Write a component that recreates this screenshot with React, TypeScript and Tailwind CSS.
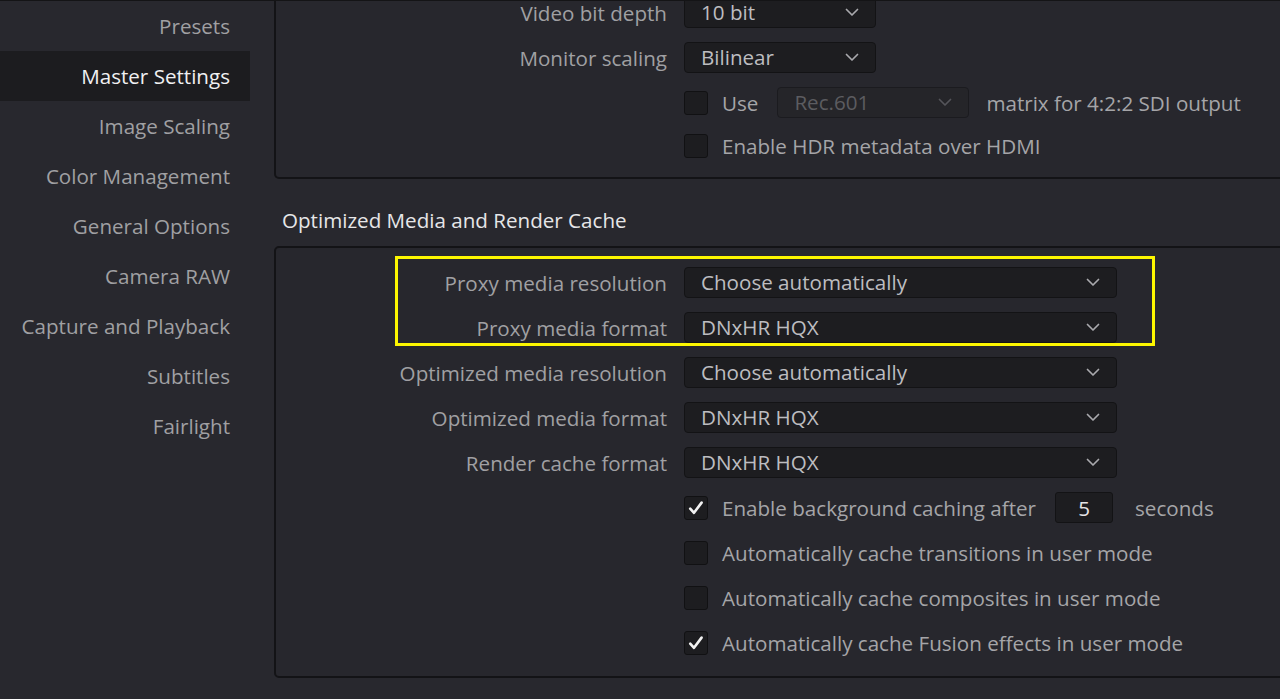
import React from "react";

const navItems = [
  "Presets",
  "Master Settings",
  "Image Scaling",
  "Color Management",
  "General Options",
  "Camera RAW",
  "Capture and Playback",
  "Subtitles",
  "Fairlight",
];

function Chevron({ muted = false }: { muted?: boolean }) {
  return (
    <svg width="14" height="9" viewBox="0 0 14 9" fill="none">
      <path
        d="M1.5 1.5 L7 7 L12.5 1.5"
        stroke={muted ? "#55555a" : "#a9a9ad"}
        strokeWidth="1.7"
        strokeLinecap="round"
        strokeLinejoin="round"
      />
    </svg>
  );
}

function Select({
  value,
  wide = false,
  disabled = false,
}: {
  value: string;
  wide?: boolean;
  disabled?: boolean;
}) {
  return (
    <div
      className={
        (wide ? "w-[433px] " : "w-[192px] ") +
        (disabled
          ? "bg-[#252529] border-[#1b1b1f] text-[#5c5c60] "
          : "bg-[#1d1d20] border-[#131315] text-[#bdbdc0] ") +
        "flex h-[31px] items-center justify-between rounded-[4px] border pl-[16px] pr-[16px]"
      }
    >
      <span className="leading-none">{value}</span>
      <Chevron muted={disabled} />
    </div>
  );
}

function Checkbox({ checked = false }: { checked?: boolean }) {
  return (
    <div className="flex h-[24px] w-[24px] shrink-0 items-center justify-center rounded-[3px] border border-[#111113] bg-[#1d1d20]">
      {checked && (
        <svg width="18" height="18" viewBox="0 0 18 18" fill="none">
          <path
            d="M3.2 9.6 L7 13.8 L14.6 3.6"
            stroke="#f2f2f2"
            strokeWidth="2.6"
            strokeLinecap="round"
            strokeLinejoin="round"
          />
        </svg>
      )}
    </div>
  );
}

function Row({
  label,
  h = "h-[45px]",
  children,
}: {
  label?: string;
  h?: string;
  children: React.ReactNode;
}) {
  return (
    <div className={"flex items-center " + h}>
      <div className="w-[391px] shrink-0 text-right text-[#a0a0a3]">{label}</div>
      <div className="ml-[17px] flex items-center">{children}</div>
    </div>
  );
}

function CheckRow({
  checked = false,
  h,
  children,
}: {
  checked?: boolean;
  h?: string;
  children: React.ReactNode;
}) {
  return (
    <Row h={h}>
      <Checkbox checked={checked} />
      <div className="ml-[14px] flex items-center text-[#a5a5a8]">{children}</div>
    </Row>
  );
}

export default function App() {
  return (
    <div className="flex h-[699px] w-[1280px] overflow-hidden border-t border-[#141416] bg-[#28282e] font-['Open_Sans','Noto_Sans',sans-serif] text-[20.6px] leading-[24px]">
      {/* settings navigation */}
      <nav className="flex w-[250px] shrink-0 flex-col">
        {navItems.map((item) => (
          <div
            key={item}
            className={
              (item === "Master Settings"
                ? "bg-[#1c1c1f] text-[#f0f0f2] "
                : "text-[#a0a0a3] ") +
              "flex h-[50px] items-center justify-end pr-[20px]"
            }
          >
            {item}
          </div>
        ))}
      </nav>

      {/* settings content */}
      <main className="flex min-w-0 flex-1 flex-col pl-[24px]">
        <section className="-mr-[20px] -mt-[11px] rounded-b-[5px] border-2 border-t-0 border-[#131316] bg-[#27272d] pb-[11px]">
          <Row label="Video bit depth">
            <Select value="10 bit" />
          </Row>
          <Row label="Monitor scaling">
            <Select value="Bilinear" />
          </Row>
          <CheckRow>
            <span>Use</span>
            <div className="ml-[19px]">
              <Select value="Rec.601" disabled />
            </div>
            <span className="ml-[17px]">matrix for 4:2:2 SDI output</span>
          </CheckRow>
          <CheckRow h="h-[41px]">
            <span>Enable HDR metadata over HDMI</span>
          </CheckRow>
        </section>

        <h2 className="pl-[8px] pt-[27px] pb-[12px] leading-[28px] text-[#e6e6e8]">
          Optimized Media and Render Cache
        </h2>

        <section className="relative -mr-[20px] rounded-[5px] border-2 border-[#131316] bg-[#27272d] pt-[12px] pb-[11px]">
          <Row label="Proxy media resolution">
            <Select value="Choose automatically" wide />
          </Row>
          <Row label="Proxy media format">
            <Select value="DNxHR HQX" wide />
          </Row>
          <Row label="Optimized media resolution">
            <Select value="Choose automatically" wide />
          </Row>
          <Row label="Optimized media format">
            <Select value="DNxHR HQX" wide />
          </Row>
          <Row label="Render cache format">
            <Select value="DNxHR HQX" wide />
          </Row>
          <CheckRow checked>
            <span>Enable background caching after</span>
            <div className="ml-[19px] flex h-[31px] w-[58px] items-center justify-center rounded-[3px] border border-[#131315] bg-[#1d1d20] text-[#e4e4e6]">
              5
            </div>
            <span className="ml-[22px]">seconds</span>
          </CheckRow>
          <CheckRow>
            <span>Automatically cache transitions in user mode</span>
          </CheckRow>
          <CheckRow>
            <span>Automatically cache composites in user mode</span>
          </CheckRow>
          <CheckRow checked>
            <span>Automatically cache Fusion effects in user mode</span>
          </CheckRow>

          {/* highlight around the proxy settings */}
          <div className="pointer-events-none absolute left-[119px] top-[8px] h-[90px] w-[760px] border-[3px] border-[#fcf600]" />
        </section>
      </main>
    </div>
  );
}
